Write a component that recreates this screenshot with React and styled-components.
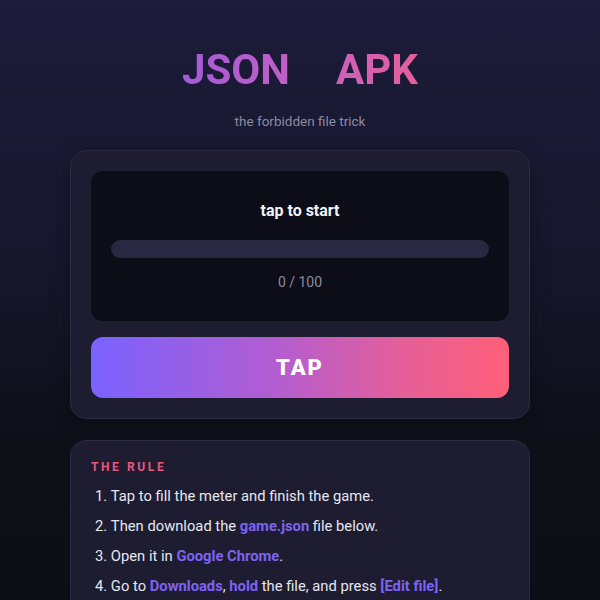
import React from "react";
import styled, { createGlobalStyle } from "styled-components";

const Global = createGlobalStyle`
  html, body { margin: 0; padding: 0; }
  body {
    min-height: 600px;
    background: linear-gradient(180deg, #1c1c3b 0%, #16162a 45%, #0e0e16 75%, #0d0d15 100%);
    font-family: Roboto, "Noto Sans", sans-serif;
    color: #ececf4;
  }
`;

const Page = styled.div`
  width: 460px;
  margin: 0 auto;
  padding-top: 48px;
  display: flex;
  flex-direction: column;
  align-items: stretch;
`;

const Title = styled.h1`
  margin: 0;
  align-self: center;
  font-size: 42px;
  line-height: 44px;
  font-weight: 700;
  background: linear-gradient(90deg, #a25bd6 0%, #c260c4 50%, #e3609a 100%);
  -webkit-background-clip: text;
  background-clip: text;
  color: transparent;
`;

const Spacer = styled.span`
  display: inline-block;
  width: 46px;
`;

const Subtitle = styled.p`
  margin: 20px 0 0;
  text-align: center;
  font-size: 13.5px;
  line-height: 18px;
  color: #8b8aa3;
`;

const Card = styled.section`
  margin-top: 20px;
  background: #1d1c31;
  border: 1px solid #2b2a44;
  border-radius: 16px;
  padding: 20px;
  display: flex;
  flex-direction: column;
  gap: 16px;
  box-shadow: 0 6px 20px rgba(0, 0, 0, 0.25);
`;

const Screen = styled.div`
  background: #0d0d17;
  border-radius: 12px;
  padding: 29px 20px 29px;
  display: flex;
  flex-direction: column;
  align-items: stretch;
`;

const Status = styled.div`
  text-align: center;
  font-size: 16px;
  line-height: 22px;
  font-weight: 700;
  color: #f2f2f8;
`;

const Meter = styled.div`
  margin-top: 18px;
  height: 18px;
  border-radius: 9px;
  background: #282842;
  overflow: hidden;
`;

const Fill = styled.div`
  height: 100%;
  background: linear-gradient(90deg, #7b61ff, #ff5f7a);
`;

const Count = styled.div`
  margin-top: 14px;
  text-align: center;
  font-size: 14px;
  line-height: 20px;
  color: #8b8aa3;
`;

const TapButton = styled.button`
  height: 61px;
  border: none;
  border-radius: 12px;
  background: linear-gradient(90deg, #7a62ff 0%, #b45dd0 45%, #e65f98 75%, #ff5f78 100%);
  color: #ffffff;
  font-family: Roboto, sans-serif;
  font-size: 22px;
  font-weight: 900;
  letter-spacing: 2px;
  cursor: pointer;
`;

const RuleCard = styled.section`
  margin-top: 21px;
  background: #1d1c31;
  border: 1px solid #2b2a44;
  border-radius: 16px;
  padding: 18px 20px 20px;
`;

const RuleTitle = styled.h2`
  margin: 0;
  font-size: 12px;
  line-height: 16px;
  font-weight: 700;
  letter-spacing: 2.6px;
  color: #e8577e;
`;

const Steps = styled.ol`
  margin: 6px 0 0;
  padding: 0 0 0 4px;
  list-style-position: inside;
  display: flex;
  flex-direction: column;
`;

const Step = styled.li`
  font-size: 14.75px;
  line-height: 30px;
  color: #e6e6ef;
`;

const Hl = styled.b`
  color: #7d63f2;
  font-weight: 700;
`;

export default function App() {
  const value = 0;
  return (
    <>
      <Global />
      <Page>
        <Title>
          JSON<Spacer />APK
        </Title>
        <Subtitle>the forbidden file trick</Subtitle>
        <Card>
          <Screen>
            <Status>tap to start</Status>
            <Meter>
              <Fill style={{ width: `${value}%` }} />
            </Meter>
            <Count>{value} / 100</Count>
          </Screen>
          <TapButton>TAP</TapButton>
        </Card>
        <RuleCard>
          <RuleTitle>THE RULE</RuleTitle>
          <Steps>
            <Step>Tap to fill the meter and finish the game.</Step>
            <Step>
              Then download the <Hl>game.json</Hl> file below.
            </Step>
            <Step>
              Open it in <Hl>Google Chrome</Hl>.
            </Step>
            <Step>
              Go to <Hl>Downloads</Hl>, <Hl>hold</Hl> the file, and press <Hl>[Edit file]</Hl>.
            </Step>
          </Steps>
        </RuleCard>
      </Page>
    </>
  );
}
